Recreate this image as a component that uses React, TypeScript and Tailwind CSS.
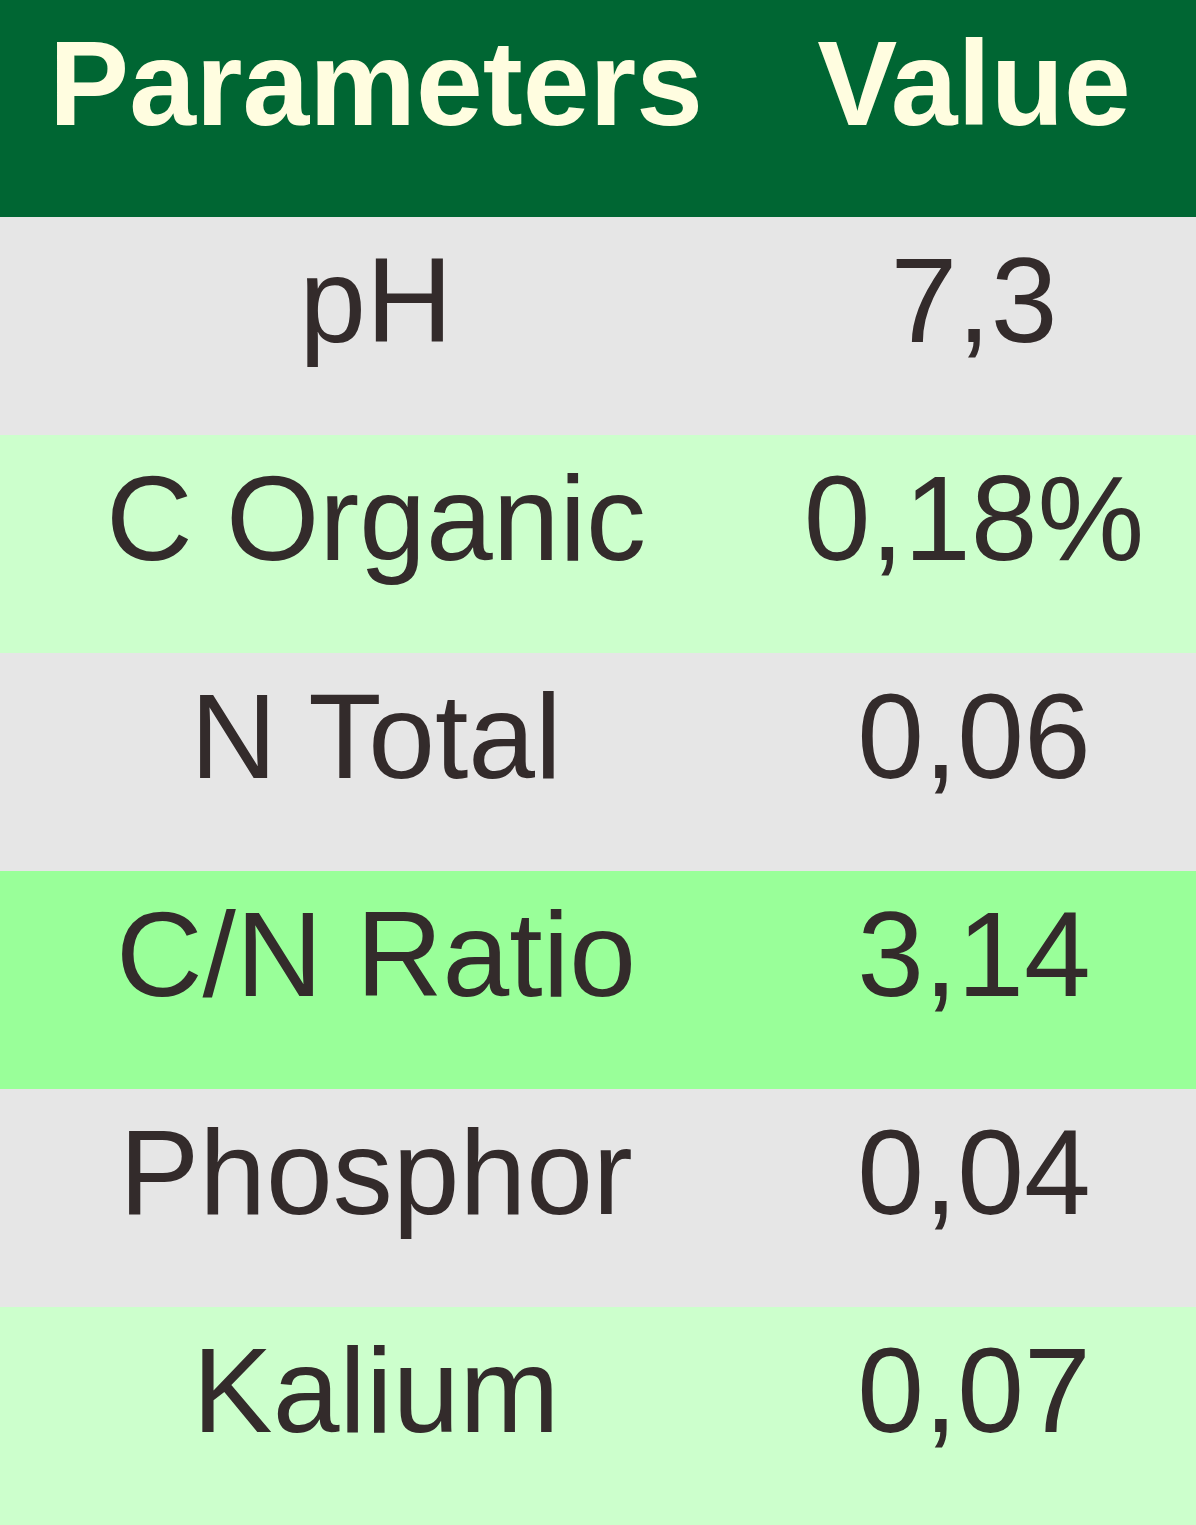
const rows = [
	{ name: 'pH', value: '7,3', bg: 'bg-[#e6e6e6]' },
	{ name: 'C Organic', value: '0,18%', bg: 'bg-[#ccffcc]' },
	{ name: 'N Total', value: '0,06', bg: 'bg-[#e6e6e6]' },
	{ name: 'C/N Ratio', value: '3,14', bg: 'bg-[#99ff99]' },
	{ name: 'Phosphor', value: '0,04', bg: 'bg-[#e6e6e6]' },
	{ name: 'Kalium', value: '0,07', bg: 'bg-[#ccffcc]' },
]

export default function App() {
	return (
		<div className="w-[1196px] font-['Liberation_Sans',Arial,sans-serif] text-[120px] leading-[166px]">
			{/* Header */}
			<div className="grid grid-cols-[752px_1fr] h-[217px] bg-[#006633] text-[#fffde0] font-bold">
				<div className="text-center">Parameters</div>
				<div className="text-center">Value</div>
			</div>

			{rows.map((row) => (
				<div
					key={row.name}
					className={`grid grid-cols-[752px_1fr] h-[218px] text-[#332b2b] ${row.bg}`}
				>
					<div className="text-center">{row.name}</div>
					<div className="text-center">{row.value}</div>
				</div>
			))}
		</div>
	)
}
